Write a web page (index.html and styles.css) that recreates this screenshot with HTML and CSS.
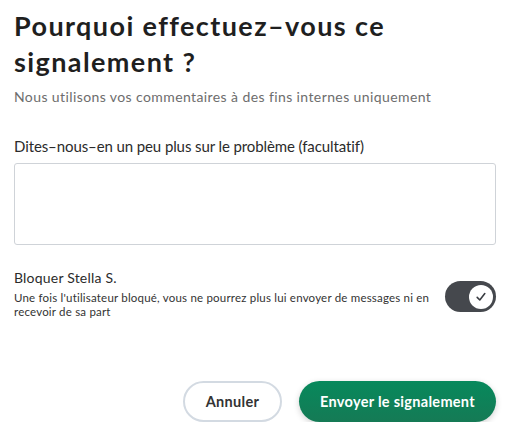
FILE: index.html
```html
<!DOCTYPE html>
<html lang="fr">
<head>
<meta charset="utf-8">
<link rel="stylesheet" href="styles.css">
</head>
<body>
<div class="modal">
  <h1 class="title">Pourquoi effectuez–vous ce signalement ?</h1>
  <p class="subtitle">Nous utilisons vos commentaires à des fins internes uniquement</p>
  <label class="label" for="details">Dites–nous–en un peu plus sur le problème (facultatif)</label>
  <textarea id="details" class="textarea"></textarea>
  <div class="block">
    <div class="block-text">
      <div class="block-title">Bloquer Stella S.</div>
      <div class="block-desc">Une fois l'utilisateur bloqué, vous ne pourrez plus lui envoyer de messages ni en recevoir de sa part</div>
    </div>
    <div class="toggle">
      <div class="knob">
        <svg width="12" height="12" viewBox="0 0 12 12"><path d="M2.2 6.4 L4.8 9 L9.8 2.6" fill="none" stroke="#3a3d42" stroke-width="1.6" stroke-linecap="round" stroke-linejoin="round"/></svg>
      </div>
    </div>
  </div>
  <div class="actions">
    <button class="btn btn-cancel">Annuler</button>
    <button class="btn btn-primary">Envoyer le signalement</button>
  </div>
</div>
</body>
</html>
```
FILE: styles.css
```css
* { box-sizing: border-box; }
html, body { margin: 0; padding: 0; background: #fff; }
body { font-family: Lato, "Noto Sans", sans-serif; color: #222; }
.modal { padding: 8px 17px 0 14px; display: flex; flex-direction: column; }
.title { margin: 0; font-size: 27px; line-height: 36px; font-weight: 700; color: #1f1f1f; letter-spacing: 1.4px; }
.subtitle { margin: 8px 0 0; font-size: 14px; line-height: 18px; color: #6d6d6d; letter-spacing: 0.4px; }
.label { margin-top: 30px; font-size: 15px; line-height: 20px; color: #2b2b2b; letter-spacing: -0.1px; }
.textarea { margin-top: 7px; height: 82px; width: 100%; border: 1px solid #cfd3d8; border-radius: 3px; resize: none; font: inherit; }
.block { margin-top: 23px; display: flex; align-items: flex-start; justify-content: space-between; gap: 8px; }
.block-text { flex: 1; }
.block-title { font-size: 14px; line-height: 20px; color: #2b2b2b; letter-spacing: 0.2px; }
.block-desc { margin-top: 3px; font-size: 11.5px; line-height: 14px; color: #333; letter-spacing: 0.2px; }
.toggle { flex: none; margin-top: 13px; width: 51px; height: 31px; border-radius: 16px; background: #45484d; display: flex; align-items: center; justify-content: flex-end; padding-right: 3px; }
.knob { width: 24px; height: 24px; border-radius: 50%; background: #fff; display: flex; align-items: center; justify-content: center; }
.actions { margin-top: 62px; display: flex; justify-content: flex-end; gap: 17px; }
.btn { font-family: inherit; font-size: 14.5px; font-weight: 700; border-radius: 21px; height: 41px; cursor: pointer; letter-spacing: 0.3px; }
.btn-cancel { width: 99px; background: #fff; border: 2px solid #d3dae2; color: #333; }
.btn-primary { width: 197px; border: none; color: #fff; background: linear-gradient(#07895c, #157a55); box-shadow: 0 2px 6px rgba(0,0,0,0.18); }
```
